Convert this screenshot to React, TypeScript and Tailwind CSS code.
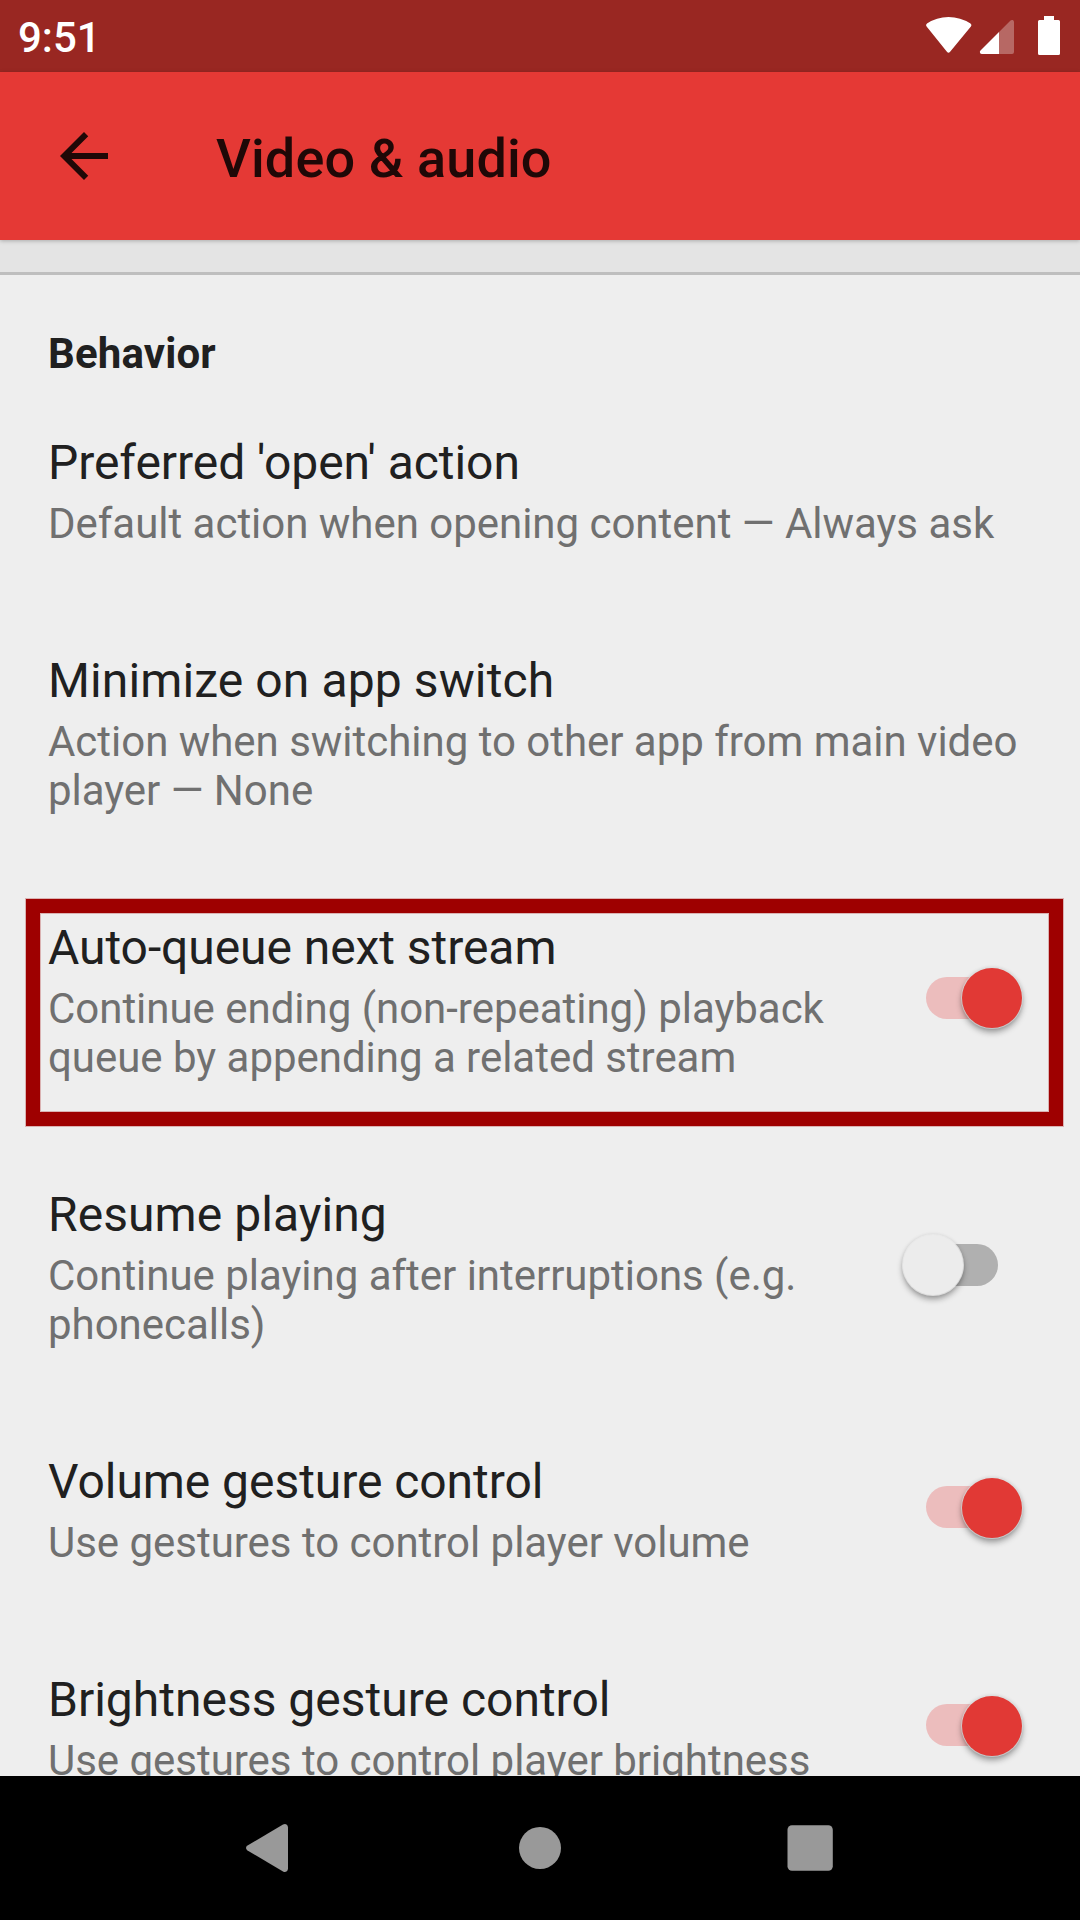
function Toggle({ on }: { on: boolean }) {
  return (
    <div className="relative mr-[82px] h-[42px] w-[72px] shrink-0">
      <div className={on ? "h-full w-full rounded-full bg-[#ecbdbd]" : "h-full w-full rounded-full bg-[#b0b0b0]"} />
      <div
        className={
          on
            ? "absolute top-[-8.5px] left-[35.5px] size-[60px] rounded-full bg-[#e13935] shadow-[0_0_0_1px_rgba(225,225,225,0.6),0_4px_6px_rgba(0,0,0,0.38),0_0_4px_rgba(0,0,0,0.12)]"
            : "absolute top-[-9px] left-[-23.5px] size-[60px] rounded-full bg-[#ececec] shadow-[0_0_0_1px_rgba(236,236,236,0.8),0_4px_6px_rgba(0,0,0,0.38),0_0_4px_rgba(0,0,0,0.12)]"
        }
      />
    </div>
  );
}

type RowProps = { title: string; tracking?: string; lines: string[]; on?: boolean; highlighted?: boolean };

function Row({ title, tracking = "", lines, on, highlighted }: RowProps) {
  return (
    <div className="relative flex items-center pl-12">
      {highlighted && (
        <div className="absolute top-[35px] left-[26px] h-[227px] w-[1037px] border-[14px] border-[#9e0000] shadow-[0_0_0_1px_rgba(158,0,0,0.25),inset_0_0_0_1px_rgba(158,0,0,0.25)]" />
      )}
      <div className="flex-1 pt-[55px] pb-[49px] whitespace-nowrap">
        <div className={`text-[48px] leading-[57px] text-[#202020] ${tracking}`}>{title}</div>
        <div className="mt-2 text-[42px] leading-[49px] tracking-[-0.025px] text-[#707070]">
          {lines.map((l) => (
            <div key={l}>{l}</div>
          ))}
        </div>
      </div>
      {on !== undefined && <Toggle on={on} />}
    </div>
  );
}

const rows: RowProps[] = [
  {
    title: "Preferred 'open' action",
    tracking: "tracking-[-0.06px]",
    lines: ["Default action when opening content — Always ask"],
  },
  {
    title: "Minimize on app switch",
    tracking: "tracking-[0.11px]",
    lines: ["Action when switching to other app from main video", "player — None"],
  },
  {
    title: "Auto-queue next stream",
    tracking: "tracking-[-0.06px]",
    lines: ["Continue ending (non-repeating) playback", "queue by appending a related stream"],
    on: true,
    highlighted: true,
  },
  {
    title: "Resume playing",
    tracking: "tracking-[0.06px]",
    lines: ["Continue playing after interruptions (e.g.", "phonecalls)"],
    on: false,
  },
  {
    title: "Volume gesture control",
    tracking: "tracking-[-0.05px]",
    lines: ["Use gestures to control player volume"],
    on: true,
  },
  { title: "Brightness gesture control", lines: ["Use gestures to control player brightness"], on: true },
];

export default function App() {
  return (
    <div className="flex h-[1920px] w-[1080px] flex-col overflow-hidden bg-[#eeeeee] font-[Roboto,sans-serif]">
      <div className="flex h-[72px] shrink-0 items-start justify-between bg-[#992722] pl-[18px]">
        <span className="mt-[13px] text-[42px] leading-[49px] font-medium text-white">9:51</span>
        <svg width="160" height="72" viewBox="920 0 160 72" fill="#fff">
          <path d="M926.6 26.6Q925.2 25 927 23.6Q936.500 17 948.500 17Q960.500 17 970.500 23.600Q972.300 25 970.900 26.600L949.900 52Q948.500 53.600 947.100 52Z" />
          <path d="M999 32L980.500 50.500Q979.500 51.500 980 52.700Q980.400 54 982 54H999Z" />
          <path d="M999 32L1010.500 20.600Q1011.500 19.600 1012.700 20.100Q1014 20.600 1014 22V52Q1014 54 1012 54H999Z" opacity=".3" />
          <path d="M1044 16h10v4h4.500q1.500 0 1.500 1.500v32q0 1.500-1.500 1.500h-19q-1.500 0-1.500-1.500v-32q0-1.500 1.500-1.500h4.500z" />
        </svg>
      </div>
      <header className="relative z-10 flex h-[168px] shrink-0 items-center bg-[#e53935] pl-12 shadow-[0_1px_4px_rgba(0,0,0,0.25)]">
        <svg className="size-[72px]" viewBox="0 0 24 24" fill="#1f0807">
          <path d="M20 11H7.830l5.590-5.590L12 4l-8 8 8 8 1.410-1.410L7.830 13H20v-2z" />
        </svg>
        <h1 className="mt-[55px] ml-24 self-start text-[54px] leading-[63px] font-medium tracking-[0.12px] text-[#1f0807]">
          Video &amp; audio
        </h1>
      </header>
      <main className="min-h-0 flex-1 overflow-hidden">
        <div className="h-[35px] border-b-[3px] border-[#bebebe] bg-[#e4e4e4]" />
        <div className="h-[104px] pt-[54px] pl-12 text-[42px] leading-[49px] font-bold tracking-[0.15px] text-[#202020]">
          Behavior
        </div>
        {rows.map((r) => (
          <Row key={r.title} {...r} />
        ))}
      </main>
      <nav className="flex h-36 shrink-0 items-center justify-center bg-black">
        <svg width="600" height="144" viewBox="240 1776 600 144" fill="#999">
          <path d="M247.500 1845.600L283 1824.600Q285 1823.500 286.500 1824.500Q288 1825.500 288 1827.500V1868.500Q288 1870.500 286.500 1871.500Q285 1872.500 283 1871.400L247.500 1850.400Q246 1849.500 246 1848T247.500 1845.600Z" />
          <circle cx="540" cy="1848" r="21" />
          <rect x="787.500" y="1825.200" width="45.300" height="45.500" rx="4.500" />
        </svg>
      </nav>
    </div>
  );
}
